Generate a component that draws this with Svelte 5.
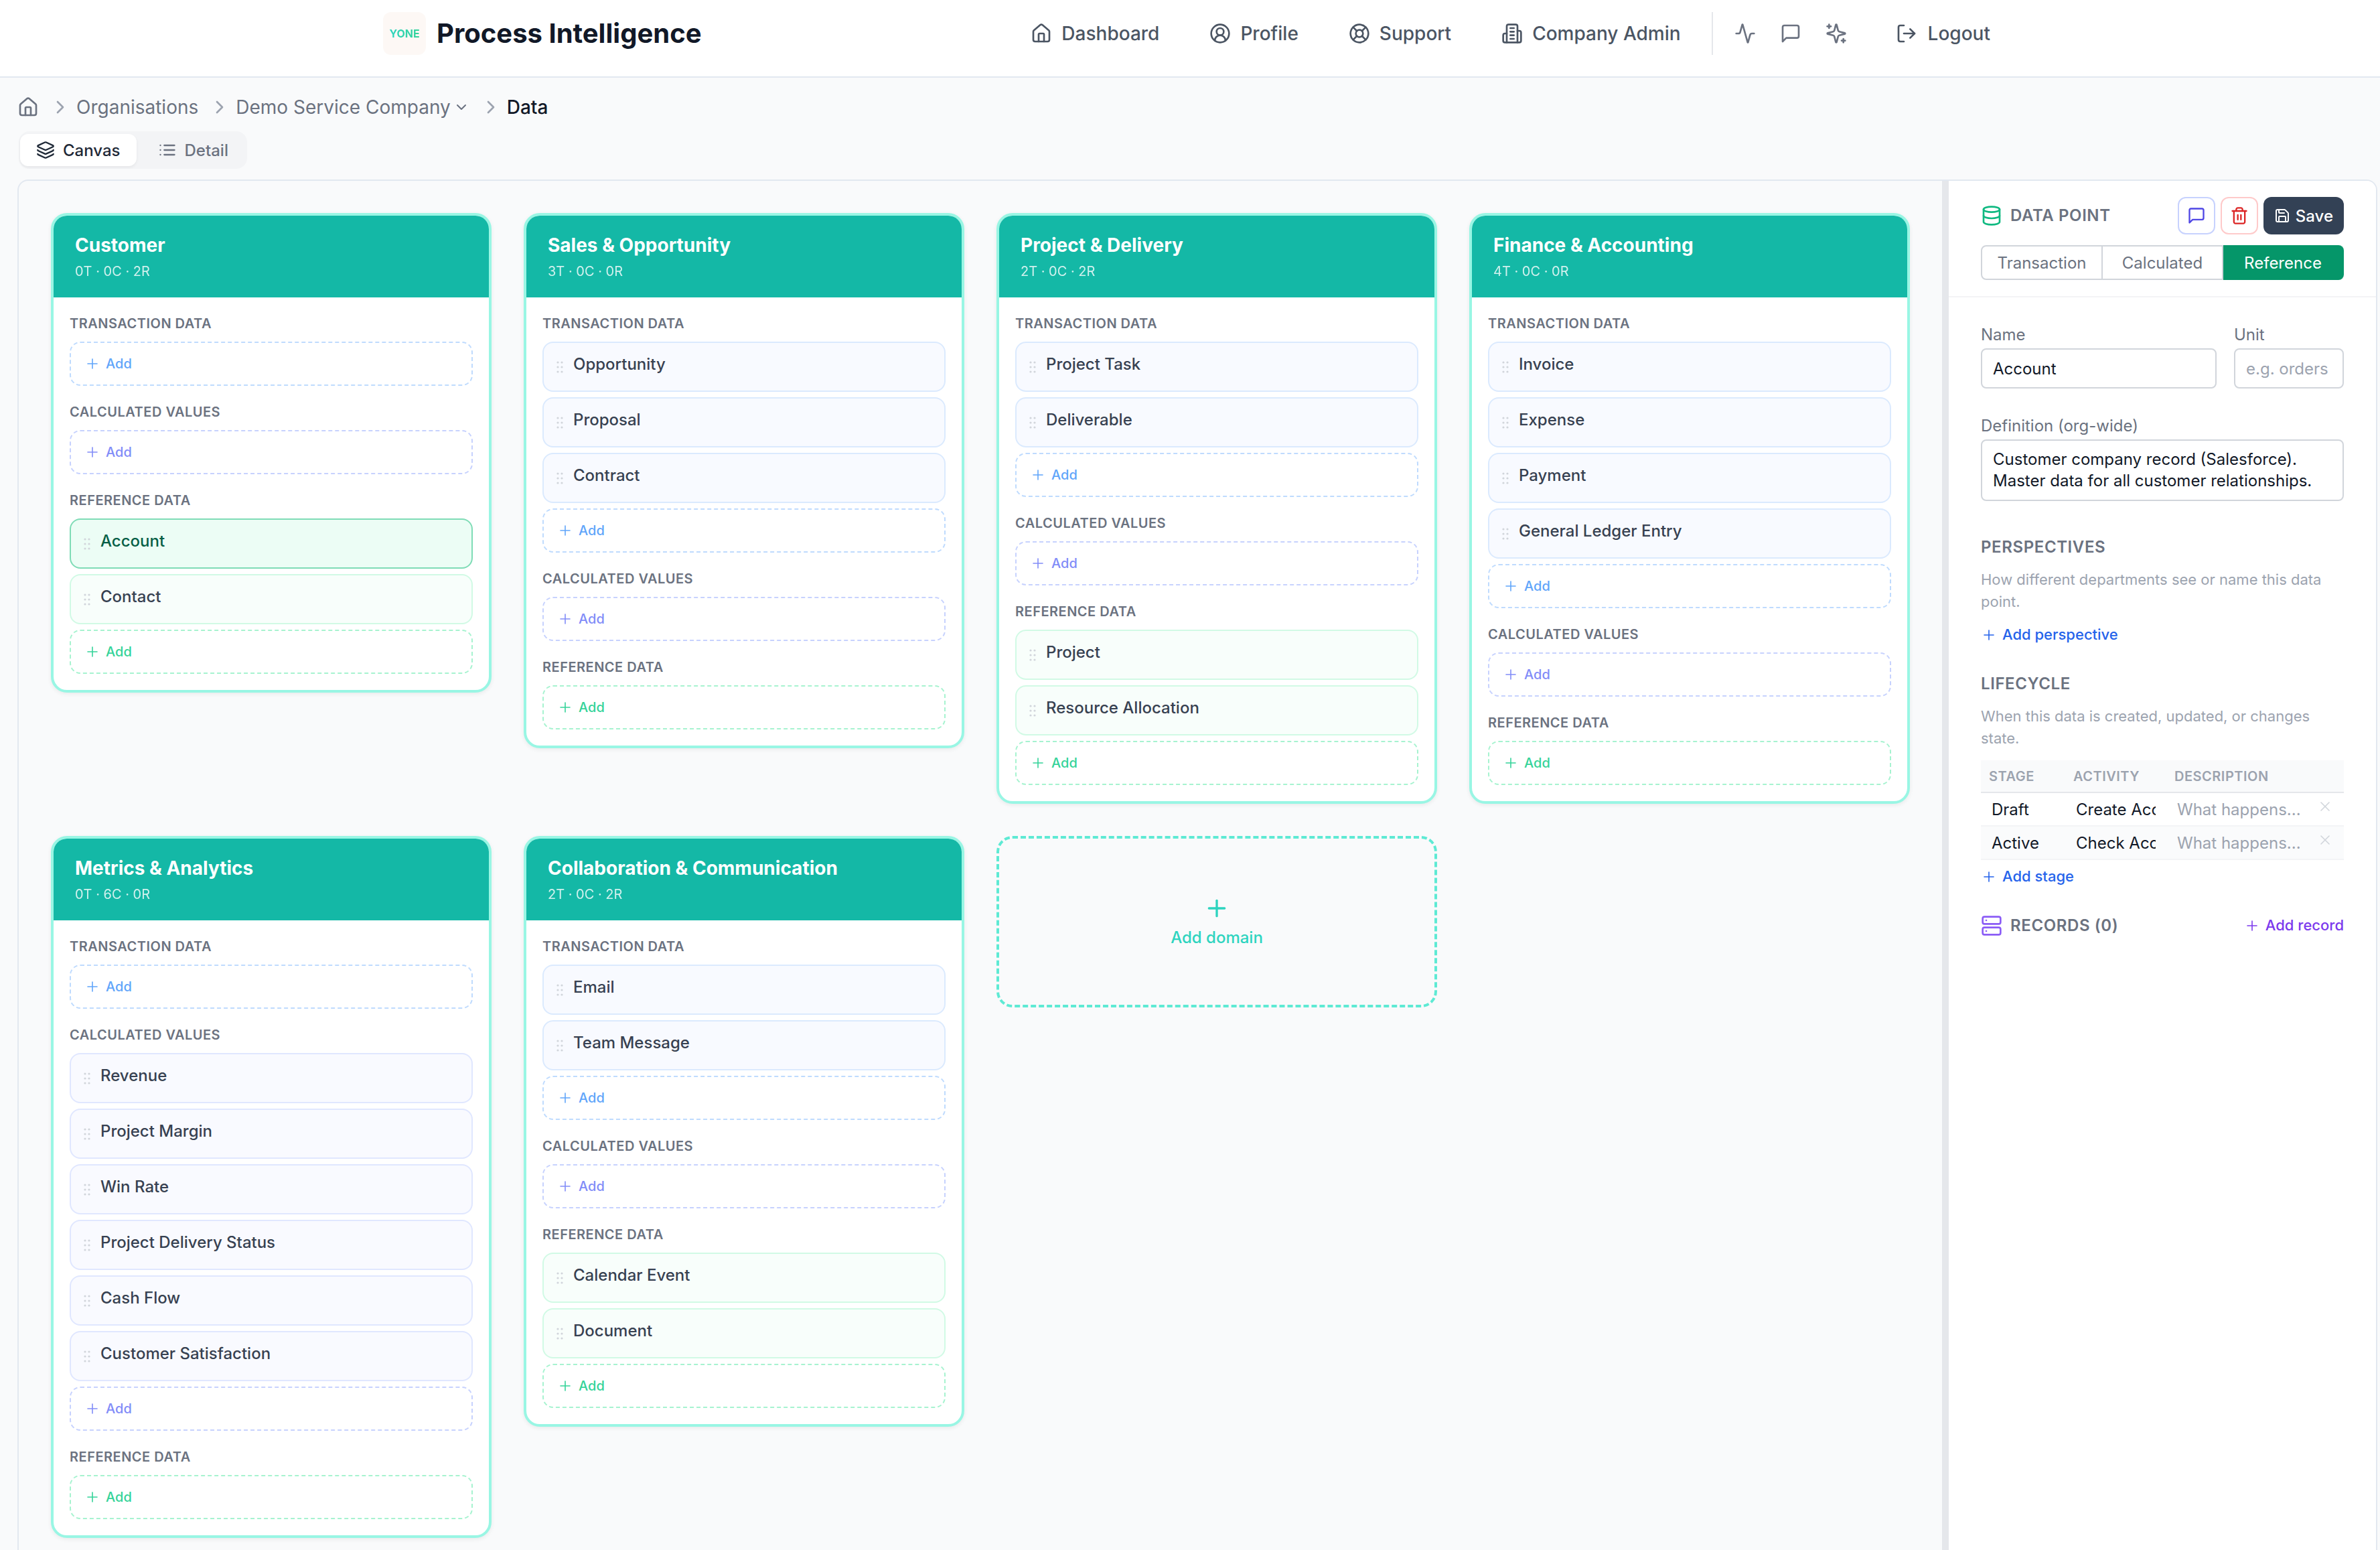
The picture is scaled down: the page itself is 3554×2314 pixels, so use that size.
<script>
  const icons = {
    house: '<path d="M15 21v-8a1 1 0 0 0-1-1h-4a1 1 0 0 0-1 1v8"/><path d="M3 10a2 2 0 0 1 .709-1.528l7-5.999a2 2 0 0 1 2.582 0l7 5.999A2 2 0 0 1 21 10v9a2 2 0 0 1-2 2H5a2 2 0 0 1-2-2z"/>',
    user: '<path d="M18 20a6 6 0 0 0-12 0"/><circle cx="12" cy="10" r="4"/><circle cx="12" cy="12" r="10"/>',
    buoy: '<circle cx="12" cy="12" r="10"/><path d="m4.93 4.93 4.24 4.24"/><path d="m14.83 9.17 4.24-4.24"/><path d="m14.83 14.83 4.24 4.24"/><path d="m9.17 14.83-4.24 4.24"/><circle cx="12" cy="12" r="4"/>',
    building: '<path d="M6 22V4a2 2 0 0 1 2-2h8a2 2 0 0 1 2 2v18Z"/><path d="M6 12H4a2 2 0 0 0-2 2v6a2 2 0 0 0 2 2h2"/><path d="M18 9h2a2 2 0 0 1 2 2v9a2 2 0 0 1-2 2h-2"/><path d="M10 6h4"/><path d="M10 10h4"/><path d="M10 14h4"/><path d="M10 18h4"/>',
    activity: '<path d="M22 12h-2.48a2 2 0 0 0-1.93 1.46l-2.35 8.36a.25.25 0 0 1-.48 0L9.24 2.18a.25.25 0 0 0-.48 0l-2.35 8.36A2 2 0 0 1 4.49 12H2"/>',
    chat: '<path d="M21 15a2 2 0 0 1-2 2H7l-4 4V5a2 2 0 0 1 2-2h14a2 2 0 0 1 2 2z"/>',
    sparkles: '<path d="M14.063 15.5A2 2 0 0 1 15.5 14.063l6.135-1.582a.5.5 0 0 0 0-.962L15.5 9.936A2 2 0 0 1 14.063 8.5l-1.582-6.135a.5.5 0 0 0-.963 0L9.937 8.5A2 2 0 0 1 8.5 9.937l-6.135 1.581a.5.5 0 0 0 0 .964L8.5 14.063a2 2 0 0 1 1.437 1.437l1.582 6.135a.5.5 0 0 0 .963 0z"/><path d="M4 2v4"/><path d="M6 4H2"/><path d="M20 18v4"/><path d="M22 20h-4"/>',
    logout: '<path d="m16 17 5-5-5-5"/><path d="M21 12H9"/><path d="M9 21H5a2 2 0 0 1-2-2V5a2 2 0 0 1 2-2h4"/>',
    right: '<path d="m9 18 6-6-6-6"/>',
    down: '<path d="m6 9 6 6 6-6"/>',
    layers: '<path d="M12.83 2.18a2 2 0 0 0-1.66 0L2.6 6.08a1 1 0 0 0 0 1.83l8.58 3.91a2 2 0 0 0 1.66 0l8.58-3.9a1 1 0 0 0 0-1.83z"/><path d="M2 12a1 1 0 0 0 .58.91l8.6 3.91a2 2 0 0 0 1.65 0l8.58-3.9A1 1 0 0 0 22 12"/><path d="M2 17a1 1 0 0 0 .58.91l8.6 3.91a2 2 0 0 0 1.65 0l8.58-3.9A1 1 0 0 0 22 17"/>',
    list: '<path d="M3 12h.01"/><path d="M3 18h.01"/><path d="M3 6h.01"/><path d="M8 12h13"/><path d="M8 18h13"/><path d="M8 6h13"/>',
    database: '<ellipse cx="12" cy="5" rx="9" ry="3"/><path d="M3 5V19A9 3 0 0 0 21 19V5"/><path d="M3 12A9 3 0 0 0 21 12"/>',
    trash: '<path d="M3 6h18"/><path d="M19 6v14c0 1-1 2-2 2H7c-1 0-2-1-2-2V6"/><path d="M8 6V4c0-1 1-2 2-2h4c1 0 2 1 2 2v2"/><line x1="10" x2="10" y1="11" y2="17"/><line x1="14" x2="14" y1="11" y2="17"/>',
    save: '<path d="M15.2 3a2 2 0 0 1 1.4.6l3.8 3.8a2 2 0 0 1 .6 1.4V19a2 2 0 0 1-2 2H5a2 2 0 0 1-2-2V5a2 2 0 0 1 2-2z"/><path d="M17 21v-7a1 1 0 0 0-1-1H8a1 1 0 0 0-1 1v7"/><path d="M7 3v4a1 1 0 0 0 1 1h7"/>',
    server: '<rect width="20" height="8" x="2" y="2" rx="2" ry="2"/><rect width="20" height="8" x="2" y="14" rx="2" ry="2"/><line x1="6" x2="6.01" y1="6" y2="6"/><line x1="6" x2="6.01" y1="18" y2="18"/>',
    plus: '<path d="M5 12h14"/><path d="M12 5v14"/>',
    x: '<path d="M18 6 6 18"/><path d="m6 6 12 12"/>'
  };

  const navLinks = [
    { label: 'Dashboard', icon: 'house' },
    { label: 'Profile', icon: 'user' },
    { label: 'Support', icon: 'buoy' },
    { label: 'Company Admin', icon: 'building' }
  ];

  const domains = [
    { name: 'Customer', t: [], c: [], r: ['Account', 'Contact'] },
    { name: 'Sales & Opportunity', t: ['Opportunity', 'Proposal', 'Contract'], c: [], r: [] },
    { name: 'Project & Delivery', t: ['Project Task', 'Deliverable'], c: [], r: ['Project', 'Resource Allocation'] },
    { name: 'Finance & Accounting', t: ['Invoice', 'Expense', 'Payment', 'General Ledger Entry'], c: [], r: [] },
    { name: 'Metrics & Analytics', t: [], c: ['Revenue', 'Project Margin', 'Win Rate', 'Project Delivery Status', 'Cash Flow', 'Customer Satisfaction'], r: [] },
    { name: 'Collaboration & Communication', t: ['Email', 'Team Message'], c: [], r: ['Calendar Event', 'Document'] }
  ];

  const stages = [
    { stage: 'Draft', activity: 'Create Account' },
    { stage: 'Active', activity: 'Check Account' }
  ];

  const selected = 'Account';
</script>

{#snippet icon(name, size, weight = 2)}
  <svg class="icon" width={size} height={size} viewBox="0 0 24 24" fill="none" stroke="currentColor" stroke-width={weight} stroke-linecap="round" stroke-linejoin="round">{@html icons[name]}</svg>
{/snippet}

{#snippet grip()}
  <svg class="grip" width="12" height="12" viewBox="0 0 24 24" fill="currentColor">
    <circle cx="9" cy="5" r="1.6" /><circle cx="15" cy="5" r="1.6" />
    <circle cx="9" cy="12" r="1.6" /><circle cx="15" cy="12" r="1.6" />
    <circle cx="9" cy="19" r="1.6" /><circle cx="15" cy="19" r="1.6" />
  </svg>
{/snippet}

{#snippet group(title, items, kind)}
  <div class="group">
    <div class="group-label">{title}</div>
    <div class="group-items">
      {#each items as item}
        <div class="item {kind}" class:selected={item === selected}>
          {@render grip()}
          <span class="item-name">{item}</span>
        </div>
      {/each}
      <div class="add {kind}">
        {@render icon('plus', 12, 1.6)}
        <span>Add</span>
      </div>
    </div>
  </div>
{/snippet}

<div class="app">
  <header class="topbar">
    <div class="topbar-inner">
      <div class="brand">
        <div class="logo"><span>YONE</span></div>
        <span class="brand-name">Process Intelligence</span>
      </div>
      <nav class="nav">
        {#each navLinks as link}
          <a class="nav-link" href="#top">{@render icon(link.icon, 16)}{link.label}</a>
        {/each}
        <span class="nav-sep"></span>
        <div class="nav-tools">
          <span class="tool">{@render icon('activity', 16)}</span>
          <span class="tool">{@render icon('chat', 16)}</span>
          <span class="tool">{@render icon('sparkles', 16)}</span>
        </div>
        <a class="nav-link logout" href="#top">{@render icon('logout', 16)}Logout</a>
      </nav>
    </div>
  </header>

  <main class="page">
    <div class="crumbs">
      <span class="crumb-home">{@render icon('house', 16)}</span>
      <span class="crumb"><span class="chev">{@render icon('right', 16)}</span>Organisations</span>
      <span class="crumb"><span class="chev">{@render icon('right', 16)}</span>Demo Service Company<span class="crumb-down">{@render icon('down', 12)}</span></span>
      <span class="crumb current"><span class="chev">{@render icon('right', 16)}</span>Data</span>
    </div>

    <div class="tabs">
      <button class="tab active">{@render icon('layers', 14)}Canvas</button>
      <button class="tab">{@render icon('list', 14)}Detail</button>
    </div>

    <div class="panel">
      <section class="canvas">
        {#each domains as d}
          <article class="card">
            <div class="card-head">
              <div class="card-title">{d.name}</div>
              <div class="card-sub">{d.t.length}T · {d.c.length}C · {d.r.length}R</div>
            </div>
            <div class="card-body">
              {@render group('Transaction Data', d.t, 'txn')}
              {@render group('Calculated Values', d.c, 'calc')}
              {@render group('Reference Data', d.r, 'ref')}
            </div>
          </article>
        {/each}
        <div class="add-domain">
          {@render icon('plus', 20)}
          <span>Add domain</span>
        </div>
      </section>

      <div class="divider"></div>

      <aside class="side">
        <div class="side-head">
          <div class="side-top">
            <div class="side-title">
              <span class="db">{@render icon('database', 16)}</span>
              <span>Data Point</span>
            </div>
            <div class="side-actions">
              <button class="square chat">{@render icon('chat', 14)}</button>
              <button class="square trash">{@render icon('trash', 14)}</button>
              <button class="save">{@render icon('save', 12)}Save</button>
            </div>
          </div>
          <div class="segments">
            <button class="segment">Transaction</button>
            <button class="segment">Calculated</button>
            <button class="segment on">Reference</button>
          </div>
        </div>

        <div class="side-body">
          <div class="two">
            <label class="field">
              <span>Name</span>
              <input value="Account" />
            </label>
            <label class="field">
              <span>Unit</span>
              <input placeholder="e.g. orders" />
            </label>
          </div>
          <label class="field definition">
            <span>Definition (org-wide)</span>
            <textarea rows="2">Customer company record (Salesforce). Master data for all customer relationships.</textarea>
          </label>

          <h3 class="section perspectives">Perspectives</h3>
          <p class="hint">How different departments see or name this data point.</p>
          <a class="link blue" href="#top">{@render icon('plus', 12, 1.6)}Add perspective</a>

          <h3 class="section lifecycle">Lifecycle</h3>
          <p class="hint">When this data is created, updated, or changes state.</p>
          <div class="table">
            <div class="t-head">
              <span>Stage</span><span>Activity</span><span>Description</span><span></span>
            </div>
            {#each stages as row}
              <div class="t-row">
                <input value={row.stage} />
                <input value={row.activity} />
                <input placeholder="What happens..." />
                <span class="t-x">{@render icon('x', 12, 1.6)}</span>
              </div>
            {/each}
          </div>
          <a class="link blue stage-link" href="#top">{@render icon('plus', 12, 1.6)}Add stage</a>

          <div class="records">
            <div class="side-title">
              <span class="srv">{@render icon('server', 16)}</span>
              <span>Records (0)</span>
            </div>
            <a class="link purple" href="#top">{@render icon('plus', 12, 1.6)}Add record</a>
          </div>
        </div>
      </aside>
    </div>
  </main>
</div>

<style>
  :global(body) {
    margin: 0;
    background: #f9fafb;
  }

  .app {
    zoom: 2;
    width: 1777px;
    height: 1157px;
    overflow: hidden;
    font-family: Inter, "Noto Sans", sans-serif;
    color: #111827;
    background: #f9fafb;
  }

  .icon {
    display: block;
    flex: none;
  }

  a {
    text-decoration: none;
  }

  button {
    font-family: inherit;
    cursor: pointer;
  }

  /* top bar */
  .topbar {
    height: 48px;
    padding-top: 9px;
    background: #fff;
    border-bottom: 1px solid #e2e8f0;
  }

  .topbar-inner {
    display: flex;
    align-items: center;
    justify-content: space-between;
    width: 1200px;
    height: 32px;
    margin-left: 286px;
  }

  .brand {
    display: flex;
    align-items: center;
    gap: 8px;
  }

  .logo {
    display: flex;
    align-items: center;
    justify-content: center;
    width: 32px;
    height: 32px;
    border-radius: 6px;
    background: #fdf8f5;
  }

  .logo span {
    font-size: 8px;
    font-weight: 700;
    background: linear-gradient(90deg, #2dd4bf, #34d399);
    -webkit-background-clip: text;
    background-clip: text;
    color: transparent;
  }

  .brand-name {
    font-size: 20px;
    font-weight: 700;
    line-height: 28px;
    color: #111827;
  }

  .nav {
    display: flex;
    align-items: center;
  }

  .nav-link {
    display: flex;
    align-items: center;
    gap: 7px;
    margin-right: 37.5px;
    font-size: 14px;
    font-weight: 500;
    color: #4b5563;
  }

  .nav-sep {
    width: 1px;
    height: 32px;
    margin-left: -14.5px;
    background: #e5e7eb;
  }

  .nav-tools {
    display: flex;
    gap: 2px;
    margin-left: 8px;
    color: #6b7280;
  }

  .tool {
    padding: 8px;
  }

  .logout {
    gap: 8px;
    margin-left: 28.5px;
    margin-right: 0;
  }

  /* breadcrumb and view tabs */
  .page {
    padding: 12px 0 0 13px;
  }

  .crumbs {
    display: flex;
    align-items: center;
    gap: 8px;
    height: 20px;
    font-size: 14px;
    line-height: 20px;
    color: #6b7280;
  }

  .crumb {
    display: flex;
    align-items: center;
    gap: 4px;
  }

  .chev {
    color: #9ca3af;
  }

  .crumb-down {
    margin-left: -2px;
  }

  .current {
    font-weight: 500;
    color: #111827;
  }

  .tabs {
    display: inline-flex;
    gap: 4px;
    margin: 8px 0 0 1px;
    padding: 2px 2px 2px 1px;
    border-radius: 8px;
    background: #f3f4f6;
  }

  .tab {
    display: flex;
    align-items: center;
    gap: 6px;
    height: 24px;
    padding: 0 12px;
    border: 0;
    border-radius: 6px;
    background: transparent;
    font-size: 12px;
    font-weight: 500;
    color: #6b7280;
  }

  .tab.active {
    background: #fff;
    color: #1f2937;
    box-shadow: 0 1px 2px rgba(0, 0, 0, 0.06);
  }

  .panel {
    display: flex;
    width: 1762px;
    min-height: 1100px;
    box-sizing: border-box;
    margin-top: 8px;
    border: 1px solid #e2e8f0;
    border-radius: 8px;
    overflow: hidden;
    background: #f9fafb;
  }

  /* canvas */
  .canvas {
    flex: 1;
    display: grid;
    grid-template-columns: repeat(4, 1fr);
    gap: 24px;
    align-items: start;
    align-content: start;
    padding: 24px;
    min-width: 0;
  }

  .card {
    overflow: hidden;
    border: 2px solid #99f6e4;
    border-radius: 12px;
    background: #fff;
    box-shadow: 0 1px 3px rgba(0, 0, 0, 0.07);
  }

  .card-head {
    padding: 12px 16px;
    background: #14b8a6;
    color: #fff;
  }

  .card-title {
    font-size: 14px;
    font-weight: 700;
    line-height: 20px;
  }

  .card-sub {
    margin-top: 2px;
    font-size: 10px;
    line-height: 15px;
    opacity: 0.8;
  }

  .card-body {
    display: flex;
    flex-direction: column;
    gap: 12px;
    padding: 12px;
  }

  .group-label {
    margin-bottom: 6px;
    font-size: 10px;
    font-weight: 600;
    line-height: 15px;
    letter-spacing: 0.025em;
    text-transform: uppercase;
    color: #6b7280;
  }

  .group-items {
    display: flex;
    flex-direction: column;
    gap: 4px;
  }

  .item {
    display: flex;
    align-items: center;
    gap: 4px;
    box-sizing: border-box;
    height: 37.5px;
    padding: 0 8px 0 6px;
    border: 1px solid;
    border-radius: 8px;
    font-size: 12px;
    font-weight: 500;
    line-height: 18px;
    color: #374151;
  }

  .item-name {
    padding-bottom: 3.5px;
  }

  .grip {
    flex: none;
    color: #d1d5db;
  }

  .item.txn {
    border-color: #dbeafe;
    background: #f8faff;
  }

  .item.calc {
    border-color: #e0e7ff;
    background: #f9faff;
  }

  .item.ref {
    border-color: #d1fae5;
    background: #f8fefb;
  }

  .item.selected {
    border-color: #7fdcb6;
    background: #ecfdf5;
    color: #065f46;
  }

  .add {
    display: flex;
    align-items: center;
    gap: 4px;
    height: 33px;
    box-sizing: border-box;
    padding: 0 8px 0 10px;
    border: 1px dashed;
    border-radius: 8px;
    font-size: 10px;
    font-weight: 500;
  }

  .add.txn {
    border-color: #bfdbfe;
    color: #60a5fa;
  }

  .add.calc {
    border-color: #c7d2fe;
    color: #818cf8;
  }

  .add.ref {
    border-color: #a7f3d0;
    color: #34d399;
  }

  .add-domain {
    display: flex;
    flex-direction: column;
    align-items: center;
    justify-content: center;
    gap: 4px;
    height: 128px;
    box-sizing: border-box;
    border: 2px dashed #5eead4;
    border-radius: 12px;
    font-size: 12px;
    font-weight: 500;
    line-height: 16px;
    color: #2dd4bf;
  }

  .divider {
    flex: none;
    width: 5px;
    background: #e5e7eb;
  }

  /* side panel */
  .side {
    flex: none;
    width: 319px;
    background: #fff;
  }

  .side-head {
    padding: 12px 24px;
    border-bottom: 1px solid #f3f4f6;
  }

  .side-top {
    display: flex;
    align-items: center;
    justify-content: space-between;
    margin-bottom: 8px;
  }

  .side-title {
    display: flex;
    align-items: center;
    gap: 6px;
    font-size: 12px;
    font-weight: 600;
    line-height: 16px;
    letter-spacing: 0.025em;
    text-transform: uppercase;
    color: #6b7280;
  }

  .db {
    color: #10b981;
  }

  .srv {
    color: #8b5cf6;
  }

  .side-actions {
    display: flex;
    gap: 4px;
  }

  .square {
    display: flex;
    padding: 6px;
    border: 1px solid;
    border-radius: 6px;
    background: #fff;
  }

  .square.chat {
    border-color: #c7d2fe;
    color: #4f46e5;
  }

  .square.trash {
    border-color: #fecaca;
    color: #dc2626;
  }

  .save {
    display: flex;
    align-items: center;
    gap: 4px;
    height: 28px;
    padding: 0 8px;
    border: 0;
    border-radius: 6px;
    background: #334155;
    font-size: 12px;
    font-weight: 500;
    color: #fff;
  }

  .segments {
    display: flex;
    height: 26px;
  }

  .segment {
    flex: 1;
    padding: 0;
    border: 1px solid #d1d5db;
    border-left-width: 0;
    background: #fff;
    font-size: 12px;
    color: #6b7280;
  }

  .segment:first-child {
    border-left-width: 1px;
    border-radius: 4px 0 0 4px;
  }

  .segment:last-child {
    border-radius: 0 4px 4px 0;
  }

  .segment.on {
    border-color: #059669;
    background: #059669;
    color: #fff;
  }

  .side-body {
    padding: 20px 24px;
  }

  .two {
    display: grid;
    grid-template-columns: 176px 82px;
    gap: 13px;
  }

  .field {
    display: block;
  }

  .field span {
    display: block;
    margin-bottom: 2px;
    font-size: 12px;
    line-height: 16px;
    color: #6b7280;
  }

  .field input,
  .field textarea {
    display: block;
    width: 100%;
    box-sizing: border-box;
    border: 1px solid #d1d5db;
    border-radius: 4px;
    background: #fff;
    font-family: inherit;
    font-size: 12px;
    color: #111827;
    outline: none;
  }

  .field input {
    height: 30px;
    padding: 0 8px;
  }

  .field textarea {
    height: 46px;
    padding: 6px 8px;
    line-height: 16px;
    resize: none;
    overflow: hidden;
  }

  input::placeholder {
    color: #9ca3af;
    opacity: 1;
  }

  .definition {
    margin-top: 20px;
  }

  .section {
    margin: 0;
    font-size: 12px;
    font-weight: 600;
    line-height: 16px;
    letter-spacing: 0.025em;
    text-transform: uppercase;
    color: #6b7280;
  }

  .perspectives {
    margin-top: 26.5px;
  }

  .lifecycle {
    margin-top: 20.5px;
  }

  .hint {
    margin: 8px 0 0;
    font-size: 11px;
    line-height: 16.5px;
    color: #9ca3af;
  }

  .link {
    display: flex;
    align-items: center;
    gap: 4px;
    width: max-content;
    font-size: 11px;
    font-weight: 500;
    line-height: 16.5px;
  }

  .blue {
    margin-top: 8px;
    color: #2563eb;
  }

  .purple {
    color: #7c3aed;
  }

  .table {
    margin-top: 8px;
  }

  .t-head,
  .t-row {
    display: grid;
    grid-template-columns: 63px 75.5px 108px 1fr;
    align-items: center;
  }

  .t-head {
    height: 24.5px;
    box-sizing: border-box;
    border-bottom: 1px solid #e5e7eb;
    background: #f9fafb;
    font-size: 10px;
    font-weight: 600;
    letter-spacing: 0.025em;
    text-transform: uppercase;
    color: #9ca3af;
  }

  .t-head span {
    padding-left: 6px;
  }

  .t-row {
    height: 25px;
    box-sizing: border-box;
    border-bottom: 1px solid #f3f4f6;
  }

  .t-row:last-child {
    background: #fafbfc;
  }

  .t-row input {
    width: 100%;
    min-width: 0;
    box-sizing: border-box;
    padding: 0 8px;
    border: 0;
    background: transparent;
    font-family: inherit;
    font-size: 12px;
    color: #111827;
    outline: none;
  }

  .t-x {
    display: flex;
    justify-content: center;
    margin: -4px 0 0 -4px;
    color: #d1d5db;
  }

  .stage-link {
    margin-top: 4px;
  }

  .records {
    display: flex;
    align-items: center;
    justify-content: space-between;
    margin-top: 20px;
  }
</style>
